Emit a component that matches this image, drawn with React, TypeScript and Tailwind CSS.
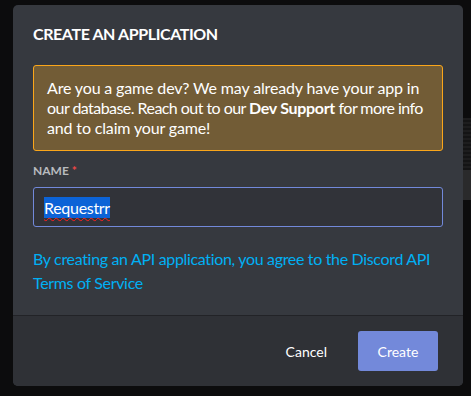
import React from "react";

export default function App() {
  return (
    <div className="w-[471px] h-[396px] bg-[#0c0c0d] flex overflow-hidden font-['Lato',_'Noto_Sans',_sans-serif]">
      <div className="w-[13px] shrink-0" />
      <div className="w-[450px] shrink-0 mt-[5px] h-[381px] bg-[#36393f] rounded-[5px] flex flex-col overflow-hidden">
        <div className="px-5 pt-[19px] pb-5 flex flex-col">
          <h2 className="text-white font-bold text-[16px] leading-[20px] uppercase tracking-[-0.4px]">
            Create an Application
          </h2>
          <div className="mt-[21px] border border-[#faa61a] bg-[#725c36] rounded-[3px] pl-[13px] pr-[6px] pt-[12px] pb-[12px] text-white text-[16px] leading-[20px] whitespace-nowrap">
            <div className="tracking-[-0.15px]">Are you a game dev? We may already have your app in</div>
            <div className="tracking-[-0.55px]">
              our database. Reach out to our <span className="font-bold tracking-[-0.3px]">Dev Support</span> for more info
            </div>
            <div className="tracking-[-0.15px]">and to claim your game!</div>
          </div>
          <div className="mt-[12px] flex items-center text-[12px] leading-[16px] font-bold uppercase text-[#b9bbbe]">
            Name<span className="text-[#f04747] ml-[3px]">*</span>
          </div>
          <div className="mt-[8px] h-[40px] border border-[#7289da] rounded-[3px] bg-[#313339] flex items-center px-[10px]">
            <span className="bg-[#0c63d7] text-white text-[16px] leading-[21px] tracking-[-0.3px] underline decoration-wavy decoration-[#ff2020] decoration-1 underline-offset-[3px]">
              Requestrr
            </span>
          </div>
          <p className="mt-[20px] text-[#00b0f4] text-[16px] leading-[24px] tracking-[-0.33px]">
            By creating an API application, you agree to the Discord API Terms of Service
          </p>
        </div>
        <div className="mt-auto border-t border-[#222327] bg-[#2f3136] py-[15px] pr-[25px] flex justify-end items-center">
          <button className="h-[40px] px-4 mr-[15px] text-white text-[14px]">Cancel</button>
          <button className="h-[40px] w-[80px] rounded-[3px] bg-[#7389da] text-white text-[14px]">Create</button>
        </div>
      </div>
      <div className="flex-1 flex flex-col">
        <div className="h-[118px]" />
        <div className="h-[52px] bg-[repeating-linear-gradient(180deg,#1d1d1e_0px,#1d1d1e_2px,#141415_2px,#141415_4px)]" />
        <div className="h-[30px] bg-[#2a2a2b]" />
      </div>
    </div>
  );
}
